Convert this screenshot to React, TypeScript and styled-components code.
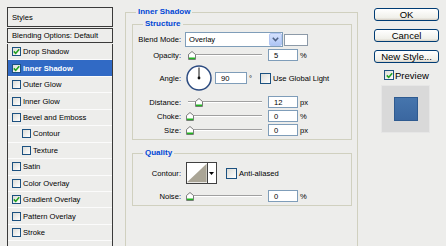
import React from 'react';
import styled, { createGlobalStyle } from 'styled-components';

const GlobalStyle = createGlobalStyle`
  html, body { margin: 0; padding: 0; background: #ededeb; }
  body { font-family: "Liberation Sans", Arial, sans-serif; }
`;

const Dialog = styled.div`
  width: 446px;
  height: 246px;
  overflow: hidden;
  display: flex;
  align-items: flex-start;
  background: #ededeb;
  font-size: 7.6px;
  color: #000;
`;

/* ---------- left style list ---------- */

const Sidebar = styled.div`
  width: 106px;
  margin: 7px 0 0 7px;
  flex-shrink: 0;
  display: flex;
  flex-direction: column;
`;

const HeadBox = styled.div<{ $h: number }>`
  height: ${p => p.$h}px;
  box-sizing: border-box;
  border: 1px solid #3a3a3a;
  display: flex;
  align-items: center;
  padding-left: 4px;
  margin-bottom: 1px;
  white-space: nowrap;
`;

const StyleList = styled.div`
  border-left: 1px solid #3a3a3a;
  border-right: 1px solid #3a3a3a;
  height: 210px;
`;

const StyleRow = styled.div<{ $indent?: boolean; $active?: boolean }>`
  height: 16.45px;
  box-sizing: border-box;
  border-bottom: 1px solid #fbfbfb;
  display: flex;
  align-items: center;
  gap: 2px;
  padding-left: ${p => (p.$indent ? 14 : 4)}px;
  background: ${p => (p.$active ? '#316ac5' : 'transparent')};
  color: ${p => (p.$active ? '#fff' : '#000')};
  font-weight: ${p => (p.$active ? 'bold' : 'normal')};
`;

const Box = styled.span<{ $size?: number }>`
  width: ${p => p.$size ?? 9}px;
  height: ${p => p.$size ?? 9}px;
  box-sizing: border-box;
  border: 1px solid #1c5180;
  background: linear-gradient(135deg, #dcdcd7, #ffffff);
  display: inline-flex;
  align-items: center;
  justify-content: center;
  flex-shrink: 0;
`;

const CheckBox: React.FC<{ checked?: boolean; size?: number }> = ({ checked, size }) => (
  <Box $size={size}>
    {checked && (
      <svg width="7" height="7" viewBox="0 0 7 7">
        <polyline points="0.8,3.4 2.7,5.4 6.2,1.2" fill="none" stroke="#21a121" strokeWidth="1.6" />
      </svg>
    )}
  </Box>
);

/* ---------- group boxes ---------- */

const Group = styled.fieldset`
  margin: 0;
  padding: 0;
  min-width: 0;
  border: 1px solid #d0d0bf;
  box-sizing: border-box;
`;

const OuterGroup = styled(Group)`
  width: 233px;
  height: 270px;
  margin: 7px 0 0 12px;
  padding-top: 2px;
  flex-shrink: 0;
`;

const InnerGroup = styled(Group)<{ $top: number; $pt: number; $pb: number }>`
  margin: ${p => p.$top}px 5px 0 6px;
  padding: ${p => p.$pt}px 0 ${p => p.$pb}px 0;
  display: flex;
  flex-direction: column;
`;

const Legend = styled.legend`
  margin-left: 10px;
  padding: 0 2px;
  font-size: 8px;
  font-weight: bold;
  color: #0046d5;
  line-height: 10px;
  height: 10px;
`;

const Row = styled.div<{ $h: number; $mt?: number }>`
  height: ${p => p.$h}px;
  margin-top: ${p => p.$mt ?? 0}px;
  display: flex;
  align-items: center;
`;

const Label = styled.span`
  width: 48px;
  text-align: right;
  margin-right: 4px;
  white-space: nowrap;
  flex-shrink: 0;
`;

const Select = styled.div`
  width: 98px;
  height: 15px;
  box-sizing: border-box;
  border: 1px solid #7f9db9;
  background: #fff;
  display: flex;
  align-items: center;
  padding-left: 3px;
`;

const SelectText = styled.span`
  flex: 1;
`;

const SelectButton = styled.span`
  width: 13px;
  height: 13px;
  box-sizing: border-box;
  border: 1px solid #b2c6f2;
  border-radius: 2px;
  background: linear-gradient(#d4e1fd, #aec5f5);
  display: flex;
  align-items: center;
  justify-content: center;
`;

const Swatch = styled.span`
  width: 24px;
  height: 12px;
  margin-left: 1px;
  box-sizing: border-box;
  border: 1px solid #8d9aa8;
  background: #fff;
`;

const Track = styled.div`
  position: relative;
  width: 78px;
  height: 12px;
  margin-right: 5px;
  flex-shrink: 0;
  &::before {
    content: '';
    position: absolute;
    left: 3px;
    right: 1px;
    top: 5px;
    height: 1px;
    background: #a0a0a0;
    border-bottom: 1px solid #fff;
  }
`;

const Thumb = styled.svg<{ $pos: number }>`
  position: absolute;
  left: ${p => p.$pos}px;
  top: 2px;
`;

const NumInput = styled.span<{ $w?: number }>`
  width: ${p => p.$w ?? 30}px;
  height: 12px;
  box-sizing: border-box;
  border: 1px solid #7f9db9;
  background: #fff;
  padding-left: 5px;
  display: flex;
  align-items: center;
  flex-shrink: 0;
`;

const Unit = styled.span`
  margin-left: 2px;
`;

const Dial = styled.svg`
  margin-left: 1px;
  margin-right: 3px;
  flex-shrink: 0;
`;

const CheckLabel = styled.label<{ $ml: number }>`
  display: flex;
  align-items: center;
  gap: 2px;
  margin-left: ${p => p.$ml}px;
  white-space: nowrap;
`;

const ContourPicker = styled.span`
  width: 31px;
  height: 22px;
  margin-left: 1px;
  box-sizing: border-box;
  border: 1px solid #404040;
  display: flex;
  background: #fff;
`;

const ContourArrow = styled.span`
  width: 9px;
  border-left: 1px solid #404040;
  display: flex;
  align-items: center;
  justify-content: center;
`;

/* ---------- right column ---------- */

const Side = styled.div`
  margin: 8px 0 0 16px;
  width: 65px;
  display: flex;
  flex-direction: column;
  font-size: 9.5px;
`;

const Button = styled.button`
  width: 65px;
  height: 13px;
  margin: 0 0 8px 0;
  padding: 0;
  box-sizing: border-box;
  border: 1px solid #003c74;
  border-radius: 3px;
  background: linear-gradient(#ffffff, #f0f0ea 80%, #d6d0c5);
  font: inherit;
  color: #000;
  line-height: 11px;
`;

const PreviewToggle = styled(CheckLabel)`
  margin-top: -1px;
  height: 10px;
  gap: 1px;
`;

const PreviewBox = styled.div`
  width: 49px;
  height: 48px;
  margin: 5px 0 0 7px;
  box-sizing: border-box;
  background: #d9d9d9;
  border: 1px solid #e6e6e6;
  display: flex;
  align-items: center;
  justify-content: center;
`;

const PreviewSquare = styled.div`
  width: 24px;
  height: 24px;
  box-sizing: border-box;
  border: 1px solid #2e5a90;
  background: linear-gradient(#4675ad, #3b67a0);
`;

const SliderThumb: React.FC<{ pos: number }> = ({ pos }) => (
  <Thumb $pos={pos} width="8" height="9" viewBox="0 0 8 9">
    <polygon points="0.5,3.5 4,0.5 7.5,3.5 7.5,8.5 0.5,8.5" fill="#fff" stroke="#7b7b7b" />
    <rect x="1" y="6.5" width="6" height="1.6" fill="#21b421" />
  </Thumb>
);

const SliderRow: React.FC<{ label: string; pos: number; value: string; unit: string; mt: number }> = ({
  label,
  pos,
  value,
  unit,
  mt,
}) => (
  <Row $h={12} $mt={mt}>
    <Label>{label}</Label>
    <Track>
      <SliderThumb pos={pos} />
    </Track>
    <NumInput>{value}</NumInput>
    <Unit>{unit}</Unit>
  </Row>
);

const styleItems = [
  { name: 'Drop Shadow', checked: true },
  { name: 'Inner Shadow', checked: true, active: true },
  { name: 'Outer Glow' },
  { name: 'Inner Glow' },
  { name: 'Bevel and Emboss' },
  { name: 'Contour', indent: true },
  { name: 'Texture', indent: true },
  { name: 'Satin' },
  { name: 'Color Overlay' },
  { name: 'Gradient Overlay', checked: true },
  { name: 'Pattern Overlay' },
  { name: 'Stroke' },
];

export default function App() {
  return (
    <Dialog>
      <GlobalStyle />
      <Sidebar>
        <HeadBox $h={20}>Styles</HeadBox>
        <HeadBox $h={15}>Blending Options: Default</HeadBox>
        <StyleList>
          {styleItems.map(item => (
            <StyleRow key={item.name} $indent={item.indent} $active={item.active}>
              <CheckBox checked={item.checked} />
              {item.name}
            </StyleRow>
          ))}
        </StyleList>
      </Sidebar>

      <OuterGroup>
        <Legend>Inner Shadow</Legend>
        <InnerGroup $top={0} $pt={3} $pb={3}>
          <Legend>Structure</Legend>
          <Row $h={15}>
            <Label>Blend Mode:</Label>
            <Select>
              <SelectText>Overlay</SelectText>
              <SelectButton>
                <svg width="7" height="5" viewBox="0 0 7 5">
                  <polyline points="0.8,0.8 3.5,3.6 6.2,0.8" fill="none" stroke="#4d6185" strokeWidth="1.5" />
                </svg>
              </SelectButton>
            </Select>
            <Swatch />
          </Row>
          <SliderRow label="Opacity:" pos={3} value="5" unit="%" mt={2} />
          <Row $h={26} $mt={4}>
            <Label>Angle:</Label>
            <Dial width="26" height="26" viewBox="0 0 26 26">
              <circle cx="13" cy="13" r="12" fill="#fff" stroke="#2c4b80" strokeWidth="1.5" />
              <line x1="13" y1="13" x2="13" y2="2.5" stroke="#111" strokeWidth="1" />
              <circle cx="13" cy="13" r="1.4" fill="#111" />
            </Dial>
            <NumInput $w={32}>90</NumInput>
            <Unit>°</Unit>
            <CheckLabel $ml={8}>
              <CheckBox size={11} />
              Use Global Light
            </CheckLabel>
          </Row>
          <SliderRow label="Distance:" pos={10} value="12" unit="px" mt={5} />
          <SliderRow label="Choke:" pos={1} value="0" unit="%" mt={2} />
          <SliderRow label="Size:" pos={1} value="0" unit="px" mt={2} />
        </InnerGroup>

        <InnerGroup $top={8} $pt={4} $pb={3}>
          <Legend>Quality</Legend>
          <Row $h={22}>
            <Label>Contour:</Label>
            <ContourPicker>
              <svg width="21" height="20" viewBox="0 0 21 20">
                <polygon points="0,20 21,0 21,20" fill="#aaa596" />
              </svg>
              <ContourArrow>
                <svg width="5" height="3" viewBox="0 0 5 3">
                  <polygon points="0,0 5,0 2.5,3" fill="#000" />
                </svg>
              </ContourArrow>
            </ContourPicker>
            <CheckLabel $ml={9}>
              <CheckBox size={11} />
              Anti-aliased
            </CheckLabel>
          </Row>
          <SliderRow label="Noise:" pos={1} value="0" unit="%" mt={6} />
        </InnerGroup>
      </OuterGroup>

      <Side>
        <Button>OK</Button>
        <Button>Cancel</Button>
        <Button>New Style...</Button>
        <PreviewToggle $ml={10}>
          <CheckBox checked size={10} />
          Preview
        </PreviewToggle>
        <PreviewBox>
          <PreviewSquare />
        </PreviewBox>
      </Side>
    </Dialog>
  );
}
